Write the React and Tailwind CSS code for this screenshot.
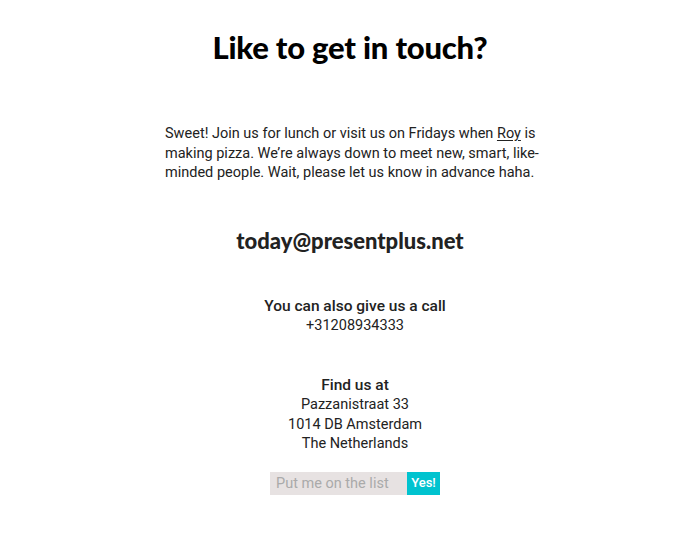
export default function App() {
  return (
    <div
      className="min-h-[551px] bg-white text-[#222] flex flex-col items-center"
      style={{ fontFamily: 'Roboto, "Liberation Sans", Arial, sans-serif' }}
    >
      <h1
        className="mt-[27px] text-[31px] leading-[40px] font-black text-black tracking-[-0.2px]"
        style={{ fontFamily: 'Lato, "Noto Sans", sans-serif' }}
      >
        Like to get in touch?
      </h1>

      <p className="mt-[57px] self-start ml-[165px] w-[386px] text-[14.5px] leading-[19.5px] text-[#222]">
        Sweet! Join us for lunch or visit us on Fridays when{" "}
        <a href="#" className="underline underline-offset-2">Roy</a> is making pizza.
        We’re always down to meet new, smart, like-minded people. Wait, please let
        us know in advance haha.
      </p>

      <h2
        className="mt-[44px] text-[22px] leading-[28px] font-black text-[#222]"
        style={{ fontFamily: 'Lato, "Noto Sans", sans-serif' }}
      >
        today@presentplus.net
      </h2>

      {/* contact + address */}
      <div className="mt-[42px] ml-[10px] text-center text-[14.5px] leading-[19.5px]">
        <div className="text-[15.5px] font-medium">You can also give us a call</div>
        <div>+31208934333</div>
      </div>

      <div className="mt-[40px] ml-[10px] text-center text-[14.5px] leading-[19.5px]">
        <div className="text-[15.5px] font-medium">Find us at</div>
        <div>Pazzanistraat 33</div>
        <div>1014 DB Amsterdam</div>
        <div>The Netherlands</div>
      </div>

      <form className="mt-[18px] ml-[10px] flex" onSubmit={(e) => e.preventDefault()}>
        <input
          type="text"
          placeholder="Put me on the list"
          className="w-[137px] h-[23px] bg-[#e7e2e2] px-[6px] text-[14.5px] placeholder:text-[#aaa] outline-none"
        />
        <button
          type="submit"
          className="h-[23px] w-[33px] bg-[#00c3cf] text-white text-[13px] font-medium"
        >
          Yes!
        </button>
      </form>
    </div>
  );
}
